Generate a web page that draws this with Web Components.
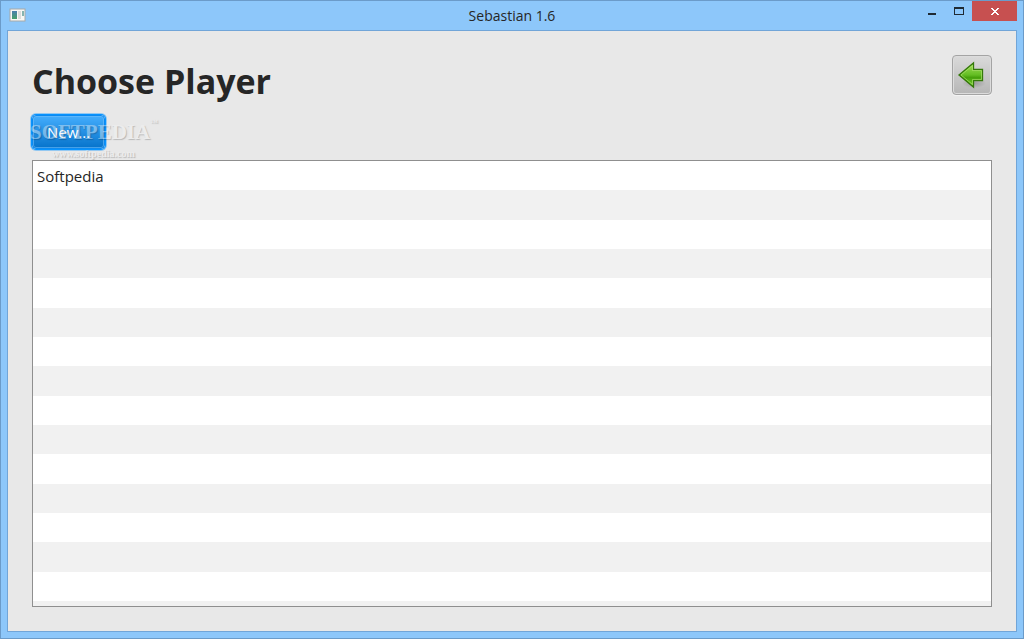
<!DOCTYPE html>
<html lang="en">
<head>
<meta charset="utf-8">
<title>Sebastian 1.6</title>
<style>
    html, body {
        height: 100%;
        margin: 0;
    }

    body {
        font-family: "Open Sans", "Noto Sans", sans-serif;
        color: #262626;
    }
</style>
</head>
<body>

<app-window caption="Sebastian 1.6">
    <page-header heading="Choose Player">
        <back-button></back-button>
    </page-header>
    <action-bar>
        <push-button>New...</push-button>
        <soft-watermark slot="overlay" brand="SOFTPEDIA" site="www.softpedia.com"></soft-watermark>
    </action-bar>
    <player-list players="Softpedia" rows="15"></player-list>
</app-window>

<template id="app-window">
    <style>
        :host {
            display: flex;
            flex-direction: column;
            box-sizing: border-box;
            height: 100%;
            min-height: 320px;
            padding: 0 6px 6px;
            border: 1px solid #6b9bc9;
            background: #8dc7fa;
        }

        header {
            display: grid;
            grid-template-columns: 1fr auto 1fr;
            height: 29px;
        }

        .icon {
            margin: 7px 0 0 2px;
        }

        .caption {
            font-size: 14px;
            line-height: 29px;
        }

        .controls {
            display: flex;
            justify-content: flex-end;
            align-items: flex-start;
        }

        .controls button {
            display: block;
            width: 27px;
            height: 20px;
            padding: 0;
            border: 0;
            background: none;
        }

        .controls .close {
            width: 45px;
            background: #c75050;
        }

        svg {
            display: block;
        }

        .controls svg {
            margin: 0 auto;
        }

        main {
            flex: 1;
            display: flex;
            flex-direction: column;
            min-height: 0;
            padding: 24px;
            border: 1px solid #71a5d8;
            background: #e8e8e8;
        }
    </style>
    <header>
        <svg class="icon" width="17" height="14" viewBox="0 0 17 14" aria-hidden="true">
            <defs>
                <linearGradient id="pane" x1="0" y1="0" x2="0" y2="1">
                    <stop offset="0" stop-color="#4a7fae"/>
                    <stop offset="1" stop-color="#46a06a"/>
                </linearGradient>
            </defs>
            <rect x="1" y="1" width="15" height="12" fill="#f7f7f5" stroke="#a8aaa8"/>
            <rect x="3" y="3" width="5" height="8" fill="url(#pane)"/>
            <rect x="9" y="3" width="3" height="8" fill="#dcdcda"/>
            <rect x="13" y="3" width="2" height="5" fill="#86b4b0"/>
        </svg>
        <span class="caption"></span>
        <div class="controls">
            <button type="button" aria-label="Minimize">
                <svg width="8" height="20" viewBox="0 0 8 20"><path d="M0 12h8v2H0z" fill="#1f2a33"/></svg>
            </button>
            <button type="button" aria-label="Maximize">
                <svg width="10" height="20" viewBox="0 0 10 20"><path d="M0 6h10v8H0zM1 8v5h8V8z" fill="#1f2a33" fill-rule="evenodd"/></svg>
            </button>
            <button type="button" class="close" aria-label="Close">
                <svg width="8" height="20" viewBox="0 0 8 20" shape-rendering="crispEdges">
                    <path d="M0 7h2v1h1v1h2V8h1V7h2v1H7v1H6v1H5v1h1v1h1v1h1v1H6v-1H5v-1H3v1H2v1H0v-1h1v-1h1v-1h1v-1H2V9H1V8H0z" fill="#fff"/>
                </svg>
            </button>
        </div>
    </header>
    <main><slot></slot></main>
</template>

<template id="page-header">
    <style>
        :host {
            display: flex;
            justify-content: space-between;
            align-items: flex-start;
            height: 60px;
        }

        h1 {
            margin: 0;
            font-size: 34px;
            font-weight: 700;
            line-height: 52px;
        }
    </style>
    <h1></h1>
    <slot></slot>
</template>

<template id="back-button">
    <style>
        :host {
            display: block;
        }

        button {
            display: block;
            box-sizing: border-box;
            width: 40px;
            height: 40px;
            padding: 0;
            border: 1px solid #a4a4a4;
            border-radius: 4px;
            background: linear-gradient(#dadada, #b6b6b6);
            box-shadow: inset 0 0 0 1px #dcdcdc, 0 1px 0 #f4f4f4;
        }

        svg {
            display: block;
            margin: 0 auto;
        }
    </style>
    <button type="button" aria-label="Back">
        <svg width="32" height="32" viewBox="0 0 32 32" aria-hidden="true">
            <defs>
                <linearGradient id="leaf" x1="0" y1="0" x2="0" y2="1">
                    <stop offset="0" stop-color="#a4e05c"/>
                    <stop offset=".5" stop-color="#63bd22"/>
                    <stop offset=".6" stop-color="#47a10c"/>
                    <stop offset="1" stop-color="#72cc2c"/>
                </linearGradient>
                <radialGradient id="shade">
                    <stop offset="0" stop-color="#000" stop-opacity=".2"/>
                    <stop offset="1" stop-color="#000" stop-opacity="0"/>
                </radialGradient>
            </defs>
            <ellipse cx="18" cy="24" rx="12" ry="5" fill="url(#shade)"/>
            <path d="M3 16 17.500 4v6.500h9v11h-9V28z" fill="url(#leaf)" stroke="#34780a" stroke-width="1.300"/>
            <path d="M5 16 16.500 6.500v5h9v9h-9v5z" fill="none" stroke="#b5ea78" stroke-opacity=".6"/>
        </svg>
    </button>
</template>

<template id="action-bar">
    <style>
        :host {
            display: block;
            position: relative;
            height: 45px;
        }

        /* the overlay lies over the buttons and lets clicks through */
        .overlay {
            position: absolute;
            top: 0;
            left: -2px;
            pointer-events: none;
        }
    </style>
    <slot></slot>
    <div class="overlay"><slot name="overlay"></slot></div>
</template>

<template id="push-button">
    <style>
        :host {
            display: inline-block;
        }

        button {
            display: block;
            box-sizing: border-box;
            height: 34px;
            padding: 0 14px;
            border: 1px solid #0c8af0;
            border-radius: 4px;
            background: linear-gradient(#44adfd, #0673cb);
            box-shadow: 0 0 0 1px #0793ff, 0 0 0 2px #0793ff60, inset 0 0 0 1px #6dbcf8a0;
            color: #fff;
            font: inherit;
            font-size: 15px;
            line-height: 30px;
        }
    </style>
    <button type="button"><slot></slot></button>
</template>

<template id="soft-watermark">
    <style>
        :host {
            display: block;
            color: #f4f4f4;
            font-family: "Liberation Serif", serif;
            text-shadow: 1px 1px 1px #00000080;
            white-space: nowrap;
            opacity: 0.4;
        }

        .brand {
            display: flex;
            align-items: flex-start;
            height: 31px;
            font-size: 21px;
            font-weight: 700;
            line-height: 34px;
        }

        .mark {
            font-size: 8px;
            line-height: 16px;
        }

        .site {
            padding-left: 22px;
            font-size: 10px;
            font-weight: 700;
            line-height: 16px;
        }
    </style>
    <div class="brand"><span class="name"></span><span class="mark">™</span></div>
    <div class="site"></div>
</template>

<template id="player-list">
    <style>
        :host {
            flex: 1;
            display: flex;
            min-height: 0;
            border: 1px solid #8f8f8f;
            background: #fff;
        }

        ul {
            flex: 1;
            display: flex;
            flex-direction: column;
            margin: 0;
            padding: 0;
            list-style: none;
            font-size: 15px;
        }

        li {
            flex: 1;
            display: flex;
            align-items: center;
            min-height: 0;
            padding: 0 4px;
        }

        li:nth-child(even) {
            background: #f1f1f1;
        }

        /* the row that is cut off by the lower edge */
        li:last-child {
            flex: 0 0 5px;
        }
    </style>
    <ul></ul>
</template>

<script>
class BaseElement extends HTMLElement {
    constructor() {
        super();
        this.attachShadow({ mode: 'open' });
        const template = document.getElementById(this.localName);
        this.shadowRoot.appendChild(template.content.cloneNode(true));
    }

    _setText(selector, attribute) {
        this.shadowRoot.querySelector(selector).textContent = this.getAttribute(attribute) || '';
    }
}

class AppWindow extends BaseElement {
    connectedCallback() {
        this._setText('.caption', 'caption');
    }
}

class PageHeader extends BaseElement {
    connectedCallback() {
        this._setText('h1', 'heading');
    }
}

class BackButton extends BaseElement {}

class ActionBar extends BaseElement {}

class PushButton extends BaseElement {}

class SoftWatermark extends BaseElement {
    connectedCallback() {
        this._setText('.name', 'brand');
        this._setText('.site', 'site');
    }
}

class PlayerList extends BaseElement {
    connectedCallback() {
        const players = (this.getAttribute('players') || '').split(',');
        const rows = parseInt(this.getAttribute('rows') || '10');
        const list = this.shadowRoot.querySelector('ul');
        list.innerHTML = '';

        // Empty rows keep the stripes going down to the lower edge
        for (let i = 0; i <= rows; i++) {
            const item = document.createElement('li');
            item.textContent = players[i] || '';
            list.appendChild(item);
        }
    }
}

customElements.define('app-window', AppWindow);
customElements.define('page-header', PageHeader);
customElements.define('back-button', BackButton);
customElements.define('action-bar', ActionBar);
customElements.define('push-button', PushButton);
customElements.define('soft-watermark', SoftWatermark);
customElements.define('player-list', PlayerList);
</script>
</body>
</html>
